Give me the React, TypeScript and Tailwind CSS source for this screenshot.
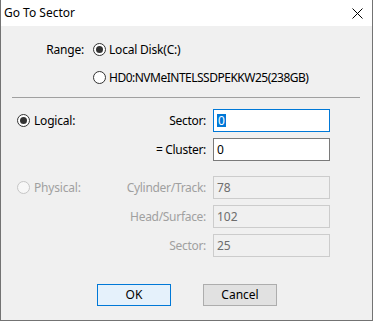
import React from "react";

const font = { fontFamily: '"Noto Sans", "Segoe UI", Arial, sans-serif' };

function Radio({ checked, disabled }: { checked?: boolean; disabled?: boolean }) {
  return (
    <div
      className={
        "w-[13px] h-[13px] rounded-full border flex items-center justify-center shrink-0 " +
        (disabled ? "border-[#c6c6c6] bg-[#f7f7f7]" : "border-[#333333] bg-white")
      }
    >
      {checked && <div className="w-[7px] h-[7px] rounded-full bg-[#333333]" />}
    </div>
  );
}

function Field({
  label,
  value,
  disabled,
  focused,
  left,
}: {
  label: string;
  value: React.ReactNode;
  disabled?: boolean;
  focused?: boolean;
  left?: React.ReactNode;
}) {
  return (
    <div className="flex items-center h-[23px] pl-[16px]">
      <div className="w-[90px] flex items-center">{left}</div>
      <div
        className={
          "w-[99px] text-right text-[12px] leading-[16px] tracking-[-0.3px] " +
          (disabled ? "text-[#a0a0a0]" : "text-black")
        }
      >
        {label}
      </div>
      <div
        className={
          "ml-[7px] w-[117px] h-[23px] border flex items-center pl-[3px] text-[12px] leading-[16px] " +
          (disabled
            ? "border-[#cccccc] bg-[#f0f0f0] text-[#6d6d6d]"
            : focused
            ? "border-[#0078d7] bg-white text-black"
            : "border-[#7a7a7a] bg-white text-black")
        }
      >
        {value}
      </div>
    </div>
  );
}

export default function App() {
  return (
    <div
      style={font}
      className="w-[373px] h-[321px] bg-[#f0f0f0] border-x border-b border-[#737373] flex flex-col text-black"
    >
      <div className="h-[26px] bg-white flex items-center justify-between shrink-0">
        <span className="pl-[3px] text-[12px] leading-[16px]">Go To Sector</span>
        <svg width="11" height="11" viewBox="0 0 11 11" className="mr-[9px]">
          <path d="M0.5 0.5 L10.5 10.5 M10.5 0.5 L0.5 10.5" stroke="#000" strokeWidth="1" />
        </svg>
      </div>

      <div className="flex items-center h-[13px] mt-[17px]">
        <div className="w-[83px] text-right text-[12px] leading-[16px] tracking-[-0.2px]">Range:</div>
        <div className="ml-[9px]">
          <Radio checked />
        </div>
        <span className="ml-[3px] text-[12px] leading-[16px] tracking-[-0.2px]">Local Disk(C:)</span>
      </div>

      <div className="flex items-center h-[13px] mt-[15px] pl-[92px]">
        <Radio />
        <span className="ml-[3px] text-[12px] leading-[16px] tracking-[-0.5px]">
          HD0:NVMeINTELSSDPEKKW25(238GB)
        </span>
      </div>

      <div className="mt-[13px] ml-[11px] mr-[12px] h-px bg-[#a0a0a0]" />

      <div className="mt-[11px]">
        <Field
          label="Sector:"
          focused
          value={<span className="bg-[#0078d7] text-white px-px leading-[13px]">0</span>}
          left={
            <>
              <Radio checked />
              <span className="ml-[4px] text-[12px] leading-[16px] tracking-[-0.2px]">Logical:</span>
            </>
          }
        />
      </div>
      <div className="mt-[6px]">
        <Field label="= Cluster:" value="0" />
      </div>

      <div className="mt-[15px]">
        <Field
          label="Cylinder/Track:"
          value="78"
          disabled
          left={
            <>
              <Radio disabled />
              <span className="ml-[4px] text-[12px] leading-[16px] tracking-[-0.2px] text-[#a0a0a0]">
                Physical:
              </span>
            </>
          }
        />
      </div>
      <div className="mt-[6px]">
        <Field label="Head/Surface:" value="102" disabled />
      </div>
      <div className="mt-[6px]">
        <Field label="Sector:" value="25" disabled />
      </div>

      <div className="mt-[27px] flex pl-[96px] gap-[32px]">
        <button className="w-[74px] h-[22px] border border-[#0078d7] bg-[#e5f1fb] text-[12px] leading-[16px] text-black">
          OK
        </button>
        <button className="w-[74px] h-[22px] border border-[#adadad] bg-[#e1e1e1] text-[12px] leading-[16px] text-black">
          Cancel
        </button>
      </div>
    </div>
  );
}
